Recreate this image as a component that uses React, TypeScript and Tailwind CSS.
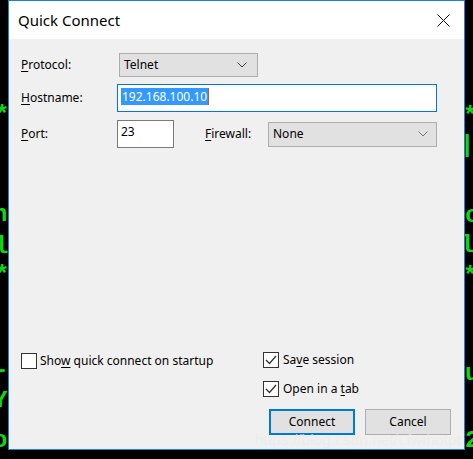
import React from "react";

const glyphs: { ch: string; x: number; y: number }[] = [
  { ch: "*", x: -5, y: 104 },
  { ch: "n", x: -7, y: 203 },
  { ch: "l", x: -6, y: 235 },
  { ch: "*", x: -5, y: 264 },
  { ch: "-", x: -6, y: 359 },
  { ch: "Y", x: -7, y: 389 },
  { ch: "o", x: -7, y: 429 },
  { ch: "*", x: 463, y: 105 },
  { ch: "|", x: 460, y: 134 },
  { ch: "c", x: 465, y: 204 },
  { ch: "l", x: 460, y: 234 },
  { ch: "*", x: 463, y: 265 },
  { ch: "u", x: 465, y: 362 },
  { ch: "2", x: 465, y: 429 },
];

function Chevron({ color }: { color: string }) {
  return (
    <svg width="10" height="6" viewBox="0 0 10 6" className="shrink-0">
      <polyline points="0.5,0.5 5,5 9.5,0.5" fill="none" stroke={color} strokeWidth="1" />
    </svg>
  );
}

function Check({ checked }: { checked: boolean }) {
  return (
    <div className="w-[16px] h-[16px] border border-[#333333] bg-white flex items-center justify-center shrink-0">
      {checked && (
        <svg width="14" height="14" viewBox="0 0 14 14">
          <polyline points="2,7 5.5,10.5 12,3" fill="none" stroke="#333333" strokeWidth="1.3" />
        </svg>
      )}
    </div>
  );
}

export default function App() {
  return (
    <div className="relative w-[473px] h-[459px] bg-black overflow-hidden font-['Segoe_UI','Noto_Sans',sans-serif] text-[12px] text-black">
      <div className="absolute inset-0">
        {glyphs.map((g, i) => (
          <span
            key={i}
            className="absolute font-['Liberation_Mono',monospace] font-bold text-[24px] leading-[24px] text-[#12d812]"
            style={{ left: g.x, top: g.y }}
          >
            {g.ch}
          </span>
        ))}
      </div>

      <div className="relative ml-[8px] w-[457px] h-[450px] border border-[#1883d7] bg-[#f0f0f0] flex flex-col">
        {/* Title bar */}
        <div className="h-[38px] bg-white flex items-center justify-between pl-[9px] pr-[14px] shrink-0">
          <span className="text-[15px] leading-none">Quick Connect</span>
          <svg width="13" height="13" viewBox="0 0 13 13">
            <line x1="0.5" y1="0.5" x2="12.5" y2="12.5" stroke="#111" strokeWidth="1" />
            <line x1="12.5" y1="0.5" x2="0.5" y2="12.5" stroke="#111" strokeWidth="1" />
          </svg>
        </div>

        {/* Form */}
        <div className="flex flex-col pl-[12px] pt-[14px]">
          <div className="flex items-center h-[24px]">
            <span className="w-[98px]">
              <span className="underline underline-offset-2">P</span>rotocol:
            </span>
            <div className="w-[139px] h-[24px] border border-[#adadad] bg-[#e1e1e1] flex items-center justify-between pl-[4px] pr-[10px]">
              <span>Telnet</span>
              <Chevron color="#404040" />
            </div>
          </div>

          <div className="flex items-center h-[28px] mt-[7px]">
            <span className="w-[96px]">
              <span className="underline underline-offset-2">H</span>ostname:
            </span>
            <div className="w-[320px] h-[28px] border border-[#0078d7] bg-white flex items-center pl-[3px] pb-[3px]">
              <span className="bg-[#3399ff] text-white px-[1px] leading-[17px]">192.168.100.10</span>
              <span className="w-[1px] h-[17px] bg-[#c06000]" />
            </div>
          </div>

          <div className="flex items-center h-[28px] mt-[8px]">
            <span className="w-[96px]">
              <span className="underline underline-offset-2">P</span>ort:
            </span>
            <div className="w-[57px] h-[28px] border border-[#7a7a7a] bg-white pl-[3px] pt-[2px]">23</div>
            <span className="ml-[31px] w-[63px]">
              <span className="underline underline-offset-2">F</span>irewall:
            </span>
            <div className="w-[169px] h-[25px] border border-[#adadad] bg-[#e1e1e1] flex items-center justify-between pl-[4px] pr-[8px]">
              <span>None</span>
              <Chevron color="#777777" />
            </div>
          </div>
        </div>

        {/* Bottom */}
        <div className="mt-auto flex pl-[12px] pb-[14px]">
          <div className="w-[242px] pt-[13px] self-start flex items-center gap-[3px]">
            <Check checked={false} />
            <span>
              Sho<span className="underline underline-offset-2">w</span> quick connect on startup
            </span>
          </div>
          <div className="flex flex-col">
            <div className="flex items-center gap-[4px] h-[16px] mt-[13px]">
              <Check checked={true} />
              <span>
                Sa<span className="underline underline-offset-2">v</span>e session
              </span>
            </div>
            <div className="flex items-center gap-[4px] h-[16px] mt-[13px]">
              <Check checked={true} />
              <span>
                Open in a <span className="underline underline-offset-2">t</span>ab
              </span>
            </div>
            <div className="flex gap-[10px] mt-[12px] ml-[6px]">
              <div className="w-[86px] h-[26px] border-2 border-[#0078d7] bg-[#e1e1e1] flex items-center justify-center">
                Connect
              </div>
              <div className="w-[86px] h-[26px] border border-[#adadad] bg-[#e1e1e1] flex items-center justify-center">
                Cancel
              </div>
            </div>
          </div>
        </div>
      </div>

      <div className="absolute left-[255px] top-[431px] font-['Liberation_Sans',sans-serif] text-[15.5px] leading-[18px] text-[rgba(235,235,235,0.75)] whitespace-nowrap">
        https://blog.csdn.net/Lfwthotpt
      </div>
    </div>
  );
}
